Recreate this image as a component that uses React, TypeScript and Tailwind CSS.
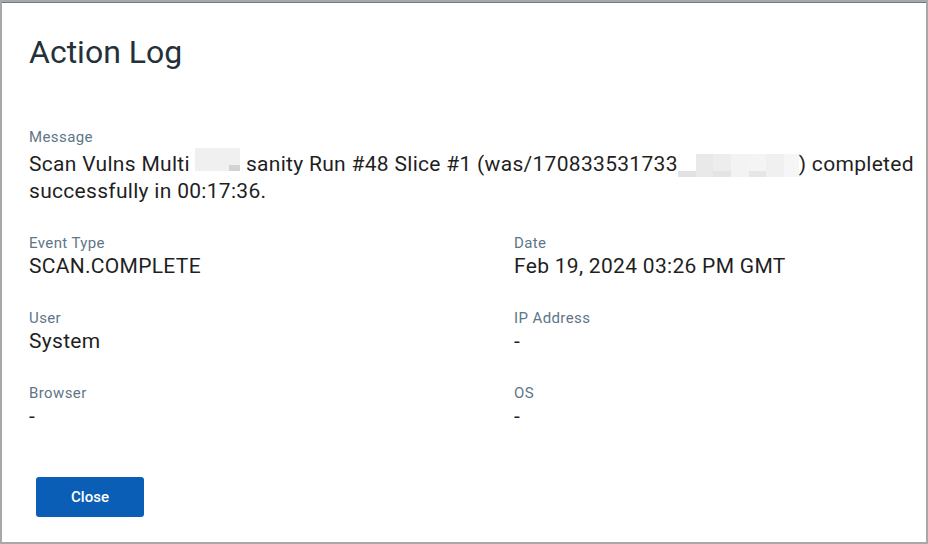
import React from "react"

const Redact1 = () => (
  <span className="inline-flex h-[23px] w-[45px] bg-[#f0f0f0] items-end">
    <span className="ml-auto h-[6px] w-[11px] bg-[#d3d3d3]" />
  </span>
)

const Redact2 = () => (
  <span className="inline-flex h-[23px] w-[121px] items-stretch">
    <span className="w-[18px] flex flex-col"><span className="flex-1 bg-white" /><span className="h-[6px] bg-[#e2e2e2]" /></span>
    <span className="w-[17px] bg-[#e9e9e9]" />
    <span className="w-[18px] flex flex-col bg-[#ededed]"><span className="flex-1" /><span className="h-[6px] bg-[#e4e4e4]" /></span>
    <span className="w-[18px] bg-[#f3f3f3]" />
    <span className="w-[17px] flex flex-col bg-[#f4f4f4]"><span className="flex-1" /><span className="h-[6px] bg-[#e6e6e6]" /></span>
    <span className="w-[18px] bg-[#f0f0f0]" />
    <span className="w-[15px] bg-[#f6f6f6]" />
  </span>
)

const Field = ({ label, value }: { label: string; value: string }) => (
  <div>
    <div className="text-[15px] leading-[20px] tracking-[0.4px] text-[#5e7688]">{label}</div>
    <div className="text-[21px] leading-[27px] tracking-[0.3px] text-[#1f1f1f]">{value}</div>
  </div>
)

export default function App() {
  return (
    <div className="w-[928px] h-[544px] border-2 border-[#a8a8a8] bg-white font-['Roboto',sans-serif]">
      <div className="h-full border-t border-[#5f7f97] pl-[27px] pt-[30px]">
        <h1 className="text-[32px] leading-[38px] text-[#24303a]">Action Log</h1>

        <div className="mt-[56px]">
          <div className="text-[15px] leading-[20px] tracking-[0.4px] text-[#5e7688]">Message</div>
          <div className="mt-[1px] text-[21px] leading-[27px] tracking-[0.3px] text-[#1f1f1f] whitespace-nowrap">
            <div>
              Scan Vulns Multi <Redact1 /> sanity Run #48 Slice #1 (was/170833531733<Redact2 />) completed
            </div>
            <div>successfully in 00:17:36.</div>
          </div>
        </div>

        <div className="mt-[28px] grid grid-cols-[485px_1fr] gap-y-[28px]">
          <Field label="Event Type" value="SCAN.COMPLETE" />
          <Field label="Date" value="Feb 19, 2024 03:26 PM GMT" />
          <Field label="User" value="System" />
          <Field label="IP Address" value="-" />
          <Field label="Browser" value="-" />
          <Field label="OS" value="-" />
        </div>

        <button className="mt-[47px] ml-[7px] w-[108px] h-[40px] rounded-[3px] bg-[#0b5eb5] text-white text-[15px] font-medium">
          Close
        </button>
      </div>
    </div>
  )
}
